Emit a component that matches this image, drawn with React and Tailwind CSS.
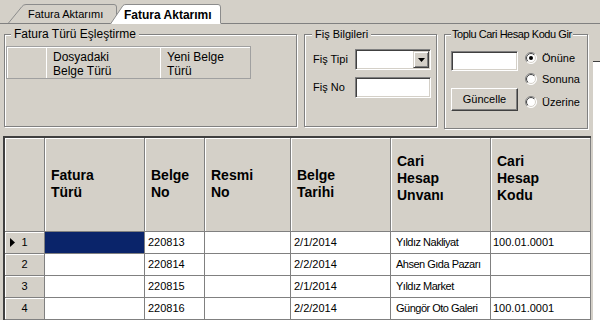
import React from 'react'

const headers = [
  { w: 'w-[100px]', lines: ['Fatura', 'Türü'] },
  { w: 'w-[60px]', lines: ['Belge', 'No'] },
  { w: 'w-[86px]', lines: ['Resmi', 'No'] },
  { w: 'w-[100px]', lines: ['Belge', 'Tarihi'] },
  { w: 'w-[100px]', lines: ['Cari', 'Hesap', 'Unvanı'] },
  { w: 'w-[100px]', lines: ['Cari', 'Hesap', 'Kodu'] },
]

const rows = [
  ['', '220813', '', '2/1/2014', 'Yıldız Nakliyat', '100.01.0001'],
  ['', '220814', '', '2/2/2014', 'Ahsen Gıda Pazarı', ''],
  ['', '220815', '', '2/1/2014', 'Yıldız Market', ''],
  ['', '220816', '', '2/2/2014', 'Güngör Oto Galeri', '100.01.0001'],
]

const cellPad = ['pl-[3px]', 'pl-[3px]', 'pl-[3px]', 'pl-[3px]', 'pl-[5px] tracking-[-0.5px]', 'pl-[2px]']

function Sunken({ className, children }) {
  return (
    <div className={`bg-white border border-t-[#808080] border-l-[#808080] border-r-white border-b-white shadow-[inset_1px_1px_0_#404040,inset_-1px_-1px_0_#d4d0c8] ${className}`}>
      {children}
    </div>
  )
}

function Radio({ id, checked, label }) {
  return (
    <div className="flex items-center h-[14px]">
      <svg width="12" height="12" viewBox="0 0 12 12">
        <defs>
          <linearGradient id={`ro${id}`} x1="0" y1="0" x2="1" y2="1">
            <stop offset="0.5" stopColor="#808080" />
            <stop offset="0.5" stopColor="#ffffff" />
          </linearGradient>
          <linearGradient id={`ri${id}`} x1="0" y1="0" x2="1" y2="1">
            <stop offset="0.5" stopColor="#404040" />
            <stop offset="0.5" stopColor="#d4d0c8" />
          </linearGradient>
        </defs>
        <circle cx="6" cy="6" r="5.5" fill="#fff" stroke={`url(#ro${id})`} strokeWidth="1" />
        <circle cx="6" cy="6" r="4.5" fill="#fff" stroke={`url(#ri${id})`} strokeWidth="1" />
        {checked && <circle cx="6" cy="6" r="2" fill="#000" />}
      </svg>
      <span className="ml-[5px]">{label}</span>
    </div>
  )
}

function Tabs() {
  return (
    <div className="h-[24px] bg-[#d4d0c8] border-b border-[#808080] flex items-end">
      <div className="relative ml-[8px] w-[110px] h-[19px] flex items-center pl-[20px]">
        <svg className="absolute inset-0" width="110" height="19" viewBox="0 0 110 19">
          <path d="M0.5 19 L14 2.5 Q15.5 0.5 18 0.5 L106 0.5 Q108.5 0.5 108.5 3 L108.5 19" fill="#d4d0c8" stroke="#8c8c8c" />
        </svg>
        <span className="relative pt-[2px]">Fatura Aktarımı</span>
      </div>
      <div className="relative -ml-[8px] -mb-px z-10 w-[111px] h-[21px] flex items-center pl-[14px]">
        <svg className="absolute inset-0" width="111" height="21" viewBox="0 0 111 21">
          <path d="M0.5 21 L13 2.5 Q14 1.5 16 1.5 L108 1.5 Q110.5 1.5 110.5 4 L110.5 21 Z" fill="#ffffff" stroke="none" />
          <path d="M0.5 21 L13 2.5 Q14 1.5 16 1.5 L108 1.5 Q110.5 1.5 110.5 4 L110.5 20" fill="none" stroke="#8c8c8c" />
        </svg>
        <span className="relative pt-[2px] text-[12px] font-bold">Fatura Aktarımı</span>
      </div>
    </div>
  )
}

const boxClass = 'border border-[#808080] shadow-[inset_1px_1px_0_#fff,1px_1px_0_#fff]'

function Groups() {
  return (
    <div className="h-[112px] flex items-start pt-[4px] pl-[4px]">
      <fieldset className={`${boxClass} w-[293px] h-[99px]`}>
        <legend className="ml-[6px] px-[3px] leading-[13px] bg-[#d4d0c8] text-[12px]">Fatura Türü Eşleştirme</legend>
        <div className="mt-[5px] ml-[1px] w-[245px] h-[33px] flex border border-[#a0a0a0] shadow-[inset_1px_1px_0_#fff] text-[12px] leading-[14px]">
          <div className="w-[40px] border-r border-white" />
          <div className="w-[114px] border-r border-white pl-[6px] pt-[3px]">Dosyadaki<br />Belge Türü</div>
          <div className="flex-1 pl-[6px] pt-[3px]">Yeni Belge<br />Türü</div>
        </div>
      </fieldset>

      <fieldset className={`${boxClass} ml-[7px] w-[133px] h-[99px]`}>
        <legend className="ml-[7px] px-[3px] leading-[13px] bg-[#d4d0c8]">Fiş Bilgileri</legend>
        <div className="mt-[8px] ml-[8px] flex items-center">
          <span className="w-[42px]">Fiş Tipi</span>
          <Sunken className="w-[76px] h-[21px] flex justify-end items-center pr-[1px]">
            <div className="w-[16px] h-[17px] flex items-center justify-center border border-t-[#d4d0c8] border-l-[#d4d0c8] border-r-[#404040] border-b-[#404040] bg-[#d4d0c8] shadow-[inset_1px_1px_0_#fff,inset_-1px_-1px_0_#808080]">
              <svg width="7" height="4" viewBox="0 0 7 4"><path d="M0 0 H7 L3.5 4 Z" fill="#000" /></svg>
            </div>
          </Sunken>
        </div>
        <div className="mt-[7px] ml-[8px] flex items-center">
          <span className="w-[42px]">Fiş No</span>
          <Sunken className="w-[76px] h-[21px]" />
        </div>
      </fieldset>

      <fieldset className={`${boxClass} ml-[7px] w-[144px] h-[101px]`}>
        <legend className="ml-[6px] px-[1px] leading-[13px] bg-[#d4d0c8] tracking-[-0.45px]">Toplu Cari Hesap Kodu Gir</legend>
        <div className="flex ml-[6px] mt-[10px]">
          <div className="flex flex-col w-[67px]">
            <Sunken className="h-[20px]" />
            <button className="mt-[17px] h-[23px] bg-[#d4d0c8] border border-t-white border-l-white border-r-[#404040] border-b-[#404040] shadow-[inset_-1px_-1px_0_#808080] text-[11px]">
              Güncelle
            </button>
          </div>
          <div className="flex flex-col ml-[7px]">
            <Radio id="a" checked label="Önüne" />
            <div className="mt-[7px]"><Radio id="b" label="Sonuna" /></div>
            <div className="mt-[9px]"><Radio id="c" label="Üzerine" /></div>
          </div>
        </div>
      </fieldset>
    </div>
  )
}

function Grid() {
  return (
    <div className="ml-[3px] w-[588px] border-t-2 border-l-2 border-[#404040]">
      <div className="flex h-[94px]">
        <div className="w-[40px] bg-[#d4d0c8] border-r border-b border-[#808080] shadow-[inset_1px_1px_0_#fff]" />
        {headers.map((h, i) => (
          <div
            key={i}
            className={`${h.w} bg-[#d4d0c8] border-r border-b border-[#808080] shadow-[inset_1px_1px_0_#fff] pl-[6px] ${h.lines.length === 3 ? 'pt-[15px]' : 'pt-[29px]'} text-[14px] font-bold leading-[17px]`}
          >
            {h.lines.map((l, j) => <div key={j}>{l}</div>)}
          </div>
        ))}
      </div>
      {rows.map((r, i) => (
        <div key={i} className="flex h-[22px]">
          <div className="w-[40px] bg-[#d4d0c8] border-r border-b border-[#808080] shadow-[inset_1px_1px_0_#fff] flex items-center justify-center relative">
            {i === 0 && (
              <svg className="absolute left-[5px] top-[6px]" width="5" height="9" viewBox="0 0 5 9"><path d="M0 0 L5 4.5 L0 9 Z" fill="#000" /></svg>
            )}
            {i + 1}
          </div>
          {r.map((c, j) => (
            <div
              key={j}
              className={`${headers[j].w} border-r border-b border-[#808080] flex items-center whitespace-nowrap overflow-hidden ${cellPad[j]} ${i === 0 && j === 0 ? 'bg-[#0a246a]' : 'bg-white'}`}
            >
              {c}
            </div>
          ))}
        </div>
      ))}
    </div>
  )
}

export default function App() {
  return (
    <div className="w-[600px] h-[320px] overflow-hidden bg-white text-black text-[11px] font-['Liberation_Sans',Arial,sans-serif]">
      <Tabs />
      <div className="flex">
        <div className="w-[593px] h-[296px] bg-[#d4d0c8] flex flex-col">
          <Groups />
          <Grid />
        </div>
        <div className="flex-1">
          <div className="h-[38px] bg-[#d4d0c8] border-b border-[#404040]" />
        </div>
      </div>
    </div>
  )
}
